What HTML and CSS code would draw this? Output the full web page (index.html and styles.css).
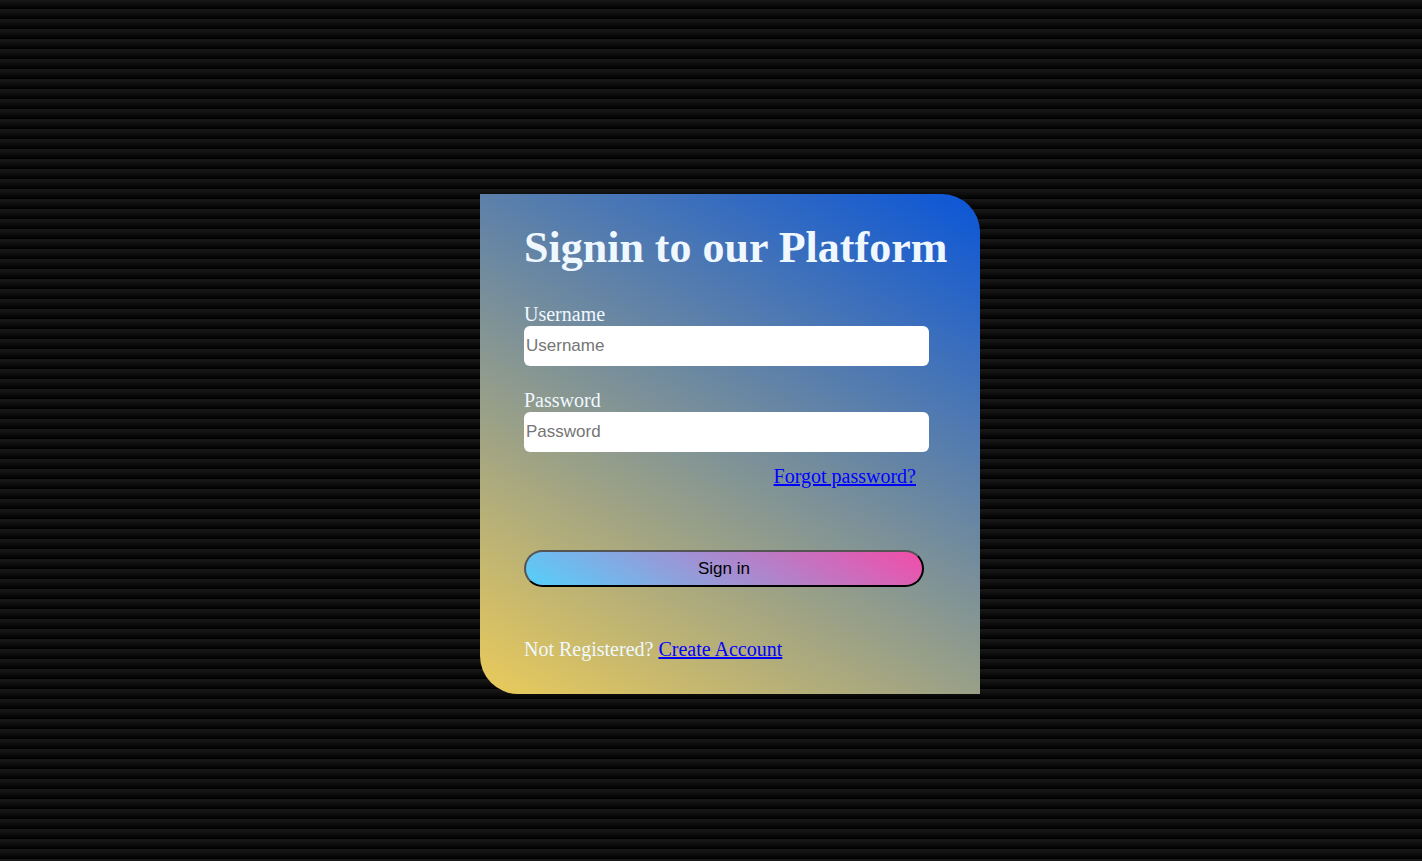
FILE: index.html
```html
<!DOCTYPE html>
<html lang="en">
<head>
<meta charset="utf-8">
<meta name="viewport" content="width=device-width, initial-scale=1">
<title>Sign in</title>
<link rel="stylesheet" href="styles.css">
</head>
<body class="page">
<main class="card">
  <h1 class="title">Signin to our Platform</h1>
  <form class="form">
    <div class="field">
      <label for="username">Username</label>
      <input class="input" id="username" type="text" placeholder="Username">
    </div>
    <div class="field">
      <label for="password">Password</label>
      <input class="input" id="password" type="password" placeholder="Password">
    </div>
    <a class="forgot" href="#">Forgot password?</a>
    <button class="submit" type="submit">Sign in</button>
  </form>
  <p class="register">Not Registered? <a href="#">Create Account</a></p>
</main>
</body>
</html>
```

FILE: styles.css
```css
* {
  box-sizing: border-box;
}

.page {
  display: flex;
  align-items: center;
  justify-content: center;
  min-height: 100vh;
  margin: 0;
  padding: 27px 0 0 38px;
  background: repeating-linear-gradient(#1a1a1a 0, #000 10px) 0 -1px;
  color: aliceblue;
  font: 20px/23px "Liberation Serif", "Times New Roman", serif;
}

.card {
  width: 500px;
  max-width: 100%;
  padding: 28px 32px 33px 44px;
  border-radius: 0 38px 0 38px;
  background: linear-gradient(30deg, #ebcb5a, #0a55d8);
}

.title {
  margin: 0 0 29px;
  font-size: 44px;
  line-height: 52px;
  white-space: nowrap;
}

.form {
  display: flex;
  flex-direction: column;
}

.field {
  display: flex;
  flex-direction: column;
  width: 405px;
  max-width: 100%;
  margin-bottom: 23px;
}

.input {
  width: 100%;
  height: 40px;
  padding: 0 2px;
  border: 0;
  border-radius: 6px;
  background: #fff;
  font: 17px "Liberation Sans", Arial, sans-serif;
}

.input::placeholder {
  color: #757575;
}

a {
  color: #00f;
}

.forgot {
  align-self: flex-end;
  margin: -10px 32px 62px 0;
}

.submit {
  width: 400px;
  max-width: 100%;
  height: 37px;
  padding: 0;
  border: 2px outset #000;
  border-radius: 20px;
  background: linear-gradient(30deg, #55d0fb, #f34ca8);
  color: #000;
  font: 17px "Liberation Sans", Arial, sans-serif;
}

.register {
  margin: 51px 0 0;
}
```
